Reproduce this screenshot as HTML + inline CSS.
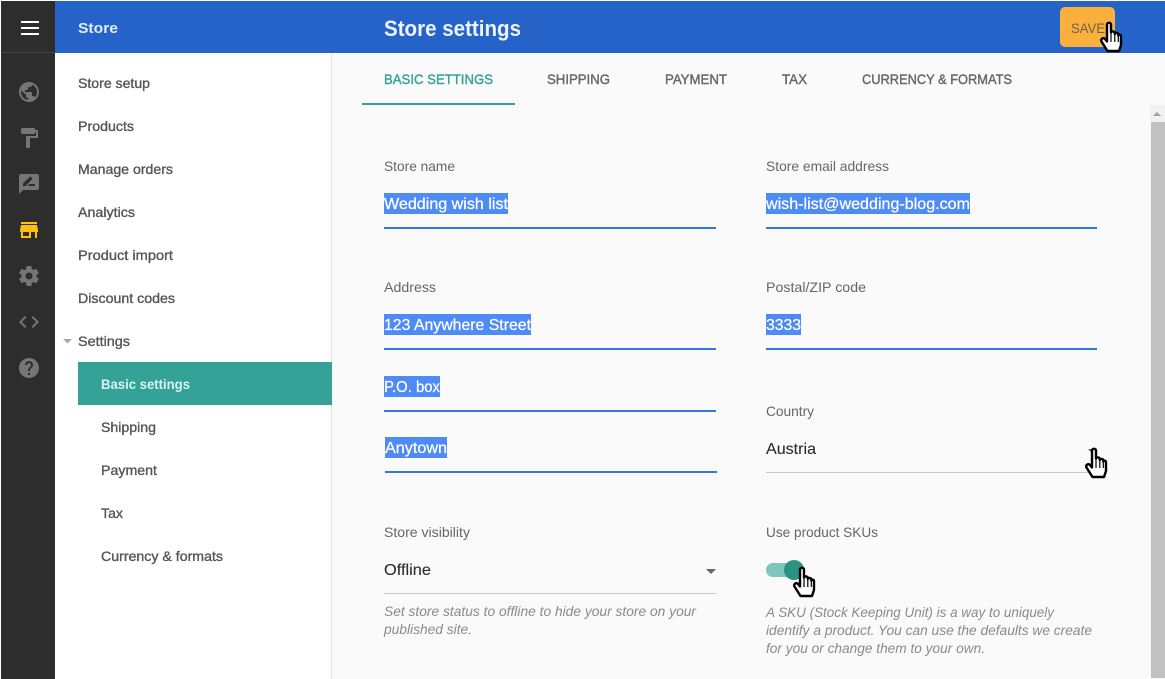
<!DOCTYPE html>
<html><head><meta charset="utf-8"><title>Store settings</title>
<style>
html,body{margin:0;padding:0;width:1165px;height:679px;overflow:hidden;background:#fff}
svg{display:block}
text{font-family:"Liberation Sans",sans-serif}
.n{font-size:14px;fill:#555;stroke:#555;stroke-width:.35}
.t{font-size:14px;fill:#666;stroke:#666;stroke-width:.4}
.l{font-size:14px;fill:#666}
.v{font-size:16px;fill:#fff;stroke:#fff;stroke-width:.25}
.d{font-size:16px;fill:#2b2b2b;stroke:#2b2b2b;stroke-width:.1}
.h{font-size:13.5px;fill:#8a8a8a;font-style:italic}
.s{fill:#4f8bf5}
.u{fill:#2f78df}
.i{fill:#757575}
</style></head><body>
<svg width="1165" height="679" viewBox="0 0 1165 679" xmlns="http://www.w3.org/2000/svg">
<defs>
<g id="hand">
<path d="M7 2.500C7 .3 11 .3 11 2.500V10.500C11.500 9 14.500 9 14.800 11V12C15.300 10.500 18 10.500 18.300 12.500V13.500C18.800 12 21 12.500 21 14.500V23L19 29H7.500L1.500 19.500C.3 17.300 3 15 5 17L7 19.500Z" fill="#fff" stroke="#000" stroke-width="2.400" stroke-linejoin="round"/>
<path d="M11 11V20M14.800 12V20M18.300 13.500V20" stroke="#000" stroke-width="1.200" fill="none"/>
</g>
</defs>
<rect width="1165" height="679" fill="#fff"/>
<!-- content bg -->
<rect x="332" y="53" width="833" height="626" fill="#fafafa"/>
<rect x="331" y="53" width="1" height="626" fill="#e2e2e2"/>
<!-- header -->
<rect x="55" y="1" width="1110" height="52" fill="#2563c9"/>
<rect x="1" y="1" width="54" height="678" fill="#2d2d2d"/>
<rect x="1" y="52" width="54" height="1" fill="#454545"/>
<rect x="21" y="21" width="18" height="2" fill="#fff"/><rect x="21" y="27" width="18" height="2" fill="#fff"/><rect x="21" y="33" width="18" height="2" fill="#fff"/>
<text x="78" y="33" font-size="15" font-weight="700" fill="#e4ecfa" textLength="40" lengthAdjust="spacingAndGlyphs">Store</text>
<text x="384" y="36" font-size="22" font-weight="700" fill="#eef3fc" textLength="137" lengthAdjust="spacingAndGlyphs">Store settings</text>
<rect x="1060" y="7" width="55" height="40" rx="5" fill="#fbb03b"/>
<text x="1071" y="33" font-size="14" fill="#6b6253" textLength="34" lengthAdjust="spacingAndGlyphs">SAVE</text>
<!-- rail icons -->
<g class="i">
<path transform="translate(17 80)" d="M12 2C6.48 2 2 6.48 2 12s4.48 10 10 10 10-4.48 10-10S17.52 2 12 2zm-1 17.93c-3.95-.49-7-3.85-7-7.93 0-.62.08-1.21.21-1.79L9 15v1c0 1.1.9 2 2 2v1.93zm6.9-2.54c-.26-.81-1-1.39-1.9-1.39h-1v-3c0-.55-.45-1-1-1H8v-2h2c.55 0 1-.45 1-1V7h2c1.1 0 2-.9 2-2v-.41c2.93 1.19 5 4.06 5 7.41 0 2.08-.8 3.97-2.1 5.39z"/>
<path transform="translate(17 126)" d="M18 4V3c0-.55-.45-1-1-1H5c-.55 0-1 .45-1 1v4c0 .55.45 1 1 1h12c.55 0 1-.45 1-1V6h1v4H9v11c0 .55.45 1 1 1h2c.55 0 1-.45 1-1v-9h8V4h-3z"/>
<path transform="translate(17 172)" d="M20 2H4c-1.1 0-1.99.9-1.99 2L2 22l4-4h14c1.1 0 2-.9 2-2V4c0-1.1-.9-2-2-2zM6 14v-2.47l6.88-6.88c.2-.2.51-.2.71 0l1.77 1.77c.2.2.2.51 0 .71L8.47 14H6zm12 0h-7.5l2-2H18v2z"/>
<path transform="translate(17 264)" d="M19.43 12.98c.04-.32.07-.64.07-.98s-.03-.66-.07-.98l2.11-1.65c.19-.15.24-.42.12-.64l-2-3.46c-.12-.22-.39-.3-.61-.22l-2.49 1c-.52-.4-1.08-.73-1.69-.98l-.38-2.65C14.46 2.18 14.25 2 14 2h-4c-.25 0-.46.18-.49.42l-.38 2.65c-.61.25-1.17.59-1.69.98l-2.49-1c-.23-.09-.49 0-.61.22l-2 3.46c-.13.22-.07.49.12.64l2.11 1.65c-.04.32-.07.65-.07.98s.03.66.07.98l-2.11 1.65c-.19.15-.24.42-.12.64l2 3.46c.12.22.39.3.61.22l2.49-1c.52.4 1.08.73 1.69.98l.38 2.65c.03.24.24.42.49.42h4c.25 0 .46-.18.49-.42l.38-2.65c.61-.25 1.17-.59 1.69-.98l2.49 1c.23.09.49 0 .61-.22l2-3.46c.12-.22.07-.49-.12-.64l-2.11-1.65zM12 15.5c-1.93 0-3.5-1.57-3.5-3.5s1.57-3.5 3.5-3.5 3.5 1.57 3.5 3.5-1.57 3.5-3.5 3.5z"/>
<path transform="translate(17 310)" d="M9.4 16.6L4.8 12l4.6-4.6L8 6l-6 6 6 6 1.4-1.4zm5.2 0l4.6-4.6-4.6-4.6L16 6l6 6-6 6-1.4-1.4z"/>
<path transform="translate(17 356)" d="M12 2C6.48 2 2 6.48 2 12s4.48 10 10 10 10-4.48 10-10S17.52 2 12 2zm1 17h-2v-2h2v2zm2.07-7.75l-.9.92C13.45 12.9 13 13.5 13 15h-2v-.5c0-1.1.45-2.1 1.17-2.83l1.24-1.26c.37-.36.59-.86.59-1.41 0-1.1-.9-2-2-2s-2 .9-2 2H8c0-2.21 1.79-4 4-4s4 1.79 4 4c0 .88-.36 1.68-.93 2.25z"/>
</g>
<path transform="translate(17 218)" fill="#ffc107" d="M20 4H4v2h16V4zm1 10v-2l-1-5H4l-1 5v2h1v6h10v-6h4v6h2v-6h1zm-9 4H6v-4h6v4z"/>
<!-- sidebar -->
<text class="n" x="78" y="88" textLength="72" lengthAdjust="spacingAndGlyphs">Store setup</text>
<text class="n" x="78" y="131" textLength="56" lengthAdjust="spacingAndGlyphs">Products</text>
<text class="n" x="78" y="174" textLength="95" lengthAdjust="spacingAndGlyphs">Manage orders</text>
<text class="n" x="78" y="217" textLength="57" lengthAdjust="spacingAndGlyphs">Analytics</text>
<text class="n" x="78" y="260" textLength="95" lengthAdjust="spacingAndGlyphs">Product import</text>
<text class="n" x="78" y="303" textLength="97" lengthAdjust="spacingAndGlyphs">Discount codes</text>
<path d="M63 339h9l-4.500 4.500z" fill="#a8a8a8"/>
<text class="n" x="78" y="346" textLength="52" lengthAdjust="spacingAndGlyphs">Settings</text>
<rect x="78" y="362" width="254" height="43" fill="#35a297"/>
<text x="101" y="389" font-size="14" font-weight="700" fill="#d8f3ef" textLength="89" lengthAdjust="spacingAndGlyphs">Basic settings</text>
<text class="n" x="101" y="432" textLength="55" lengthAdjust="spacingAndGlyphs">Shipping</text>
<text class="n" x="101" y="475" textLength="56" lengthAdjust="spacingAndGlyphs">Payment</text>
<text class="n" x="101" y="518" textLength="22" lengthAdjust="spacingAndGlyphs">Tax</text>
<text class="n" x="101" y="561" textLength="122" lengthAdjust="spacingAndGlyphs">Currency &amp; formats</text>
<!-- tabs -->
<text class="t" style="fill:#35a297;stroke:#35a297" x="384" y="84" textLength="109" lengthAdjust="spacingAndGlyphs">BASIC SETTINGS</text>
<text class="t" x="547" y="84" textLength="63" lengthAdjust="spacingAndGlyphs">SHIPPING</text>
<text class="t" x="665" y="84" textLength="62" lengthAdjust="spacingAndGlyphs">PAYMENT</text>
<text class="t" x="782" y="84" textLength="25" lengthAdjust="spacingAndGlyphs">TAX</text>
<text class="t" x="862" y="84" textLength="150" lengthAdjust="spacingAndGlyphs">CURRENCY &amp; FORMATS</text>
<rect x="362" y="103" width="153" height="2" fill="#35a297"/>
<!-- form left -->
<text class="l" x="384" y="171" textLength="71" lengthAdjust="spacingAndGlyphs">Store name</text>
<rect class="s" x="384" y="193" width="124" height="21"/>
<text class="v" x="384" y="209" textLength="124" lengthAdjust="spacingAndGlyphs">Wedding wish list</text>
<rect class="u" x="384" y="227" width="332" height="2"/>
<text class="l" x="384" y="292" textLength="52" lengthAdjust="spacingAndGlyphs">Address</text>
<rect class="s" x="384" y="314" width="147" height="21"/>
<text class="v" x="384" y="330" textLength="147" lengthAdjust="spacingAndGlyphs">123 Anywhere Street</text>
<rect class="u" x="384" y="348" width="332" height="2"/>
<rect class="s" x="384" y="376" width="56" height="21"/>
<text class="v" x="384" y="392" textLength="56" lengthAdjust="spacingAndGlyphs">P.O. box</text>
<rect class="u" x="384" y="410" width="332" height="2"/>
<rect class="s" x="385" y="437" width="62" height="21"/>
<text class="v" x="385" y="453" textLength="62" lengthAdjust="spacingAndGlyphs">Anytown</text>
<rect class="u" x="385" y="471" width="332" height="2"/>
<text class="l" x="384" y="537" textLength="86" lengthAdjust="spacingAndGlyphs">Store visibility</text>
<text class="d" x="384" y="575" textLength="47" lengthAdjust="spacingAndGlyphs">Offline</text>
<path d="M706 569h10l-5 5z" fill="#666"/>
<rect x="384" y="593" width="332" height="1" fill="#c8c8c8"/>
<text class="h" x="384" y="616" textLength="312" lengthAdjust="spacingAndGlyphs">Set store status to offline to hide your store on your</text>
<text class="h" x="384" y="634" textLength="88" lengthAdjust="spacingAndGlyphs">published site.</text>
<!-- form right -->
<text class="l" x="766" y="171" textLength="123" lengthAdjust="spacingAndGlyphs">Store email address</text>
<rect class="s" x="766" y="193" width="204" height="21"/>
<text class="v" x="766" y="209" textLength="204" lengthAdjust="spacingAndGlyphs">wish-list@wedding-blog.com</text>
<rect class="u" x="766" y="227" width="331" height="2"/>
<text class="l" x="766" y="292" textLength="100" lengthAdjust="spacingAndGlyphs">Postal/ZIP code</text>
<rect class="s" x="766" y="314" width="35" height="21"/>
<text class="v" x="766" y="330" textLength="35" lengthAdjust="spacingAndGlyphs">3333</text>
<rect class="u" x="766" y="348" width="331" height="2"/>
<text class="l" x="766" y="416" textLength="48" lengthAdjust="spacingAndGlyphs">Country</text>
<text class="d" x="766" y="454" textLength="50" lengthAdjust="spacingAndGlyphs">Austria</text>
<rect x="766" y="472" width="331" height="1" fill="#c8c8c8"/>
<path d="M1088 449h9l-4.500 5z" fill="#666"/>
<text class="l" x="766" y="537" textLength="112" lengthAdjust="spacingAndGlyphs">Use product SKUs</text>
<rect x="766" y="563" width="34" height="14" rx="7" fill="#7fc5bc"/>
<circle cx="794" cy="570" r="10" fill="#2b9384"/>
<text class="h" x="766" y="617" textLength="288" lengthAdjust="spacingAndGlyphs">A SKU (Stock Keeping Unit) is a way to uniquely</text>
<text class="h" x="766" y="635" textLength="326" lengthAdjust="spacingAndGlyphs">identify a product. You can use the defaults we create</text>
<text class="h" x="766" y="653" textLength="219" lengthAdjust="spacingAndGlyphs">for you or change them to your own.</text>
<!-- scrollbar -->
<rect x="1150" y="105" width="15" height="17" fill="#f1f1f1"/>
<path d="M1153 116h8l-4-4z" fill="#a3a3a3"/>
<rect x="1151" y="122" width="14" height="556" fill="#c1c1c1"/>
<!-- cursors -->
<use href="#hand" transform="translate(1100 22)"/>
<use href="#hand" transform="translate(1085 448)"/>
<use href="#hand" transform="translate(793 567)"/>
</svg>
</body></html>
